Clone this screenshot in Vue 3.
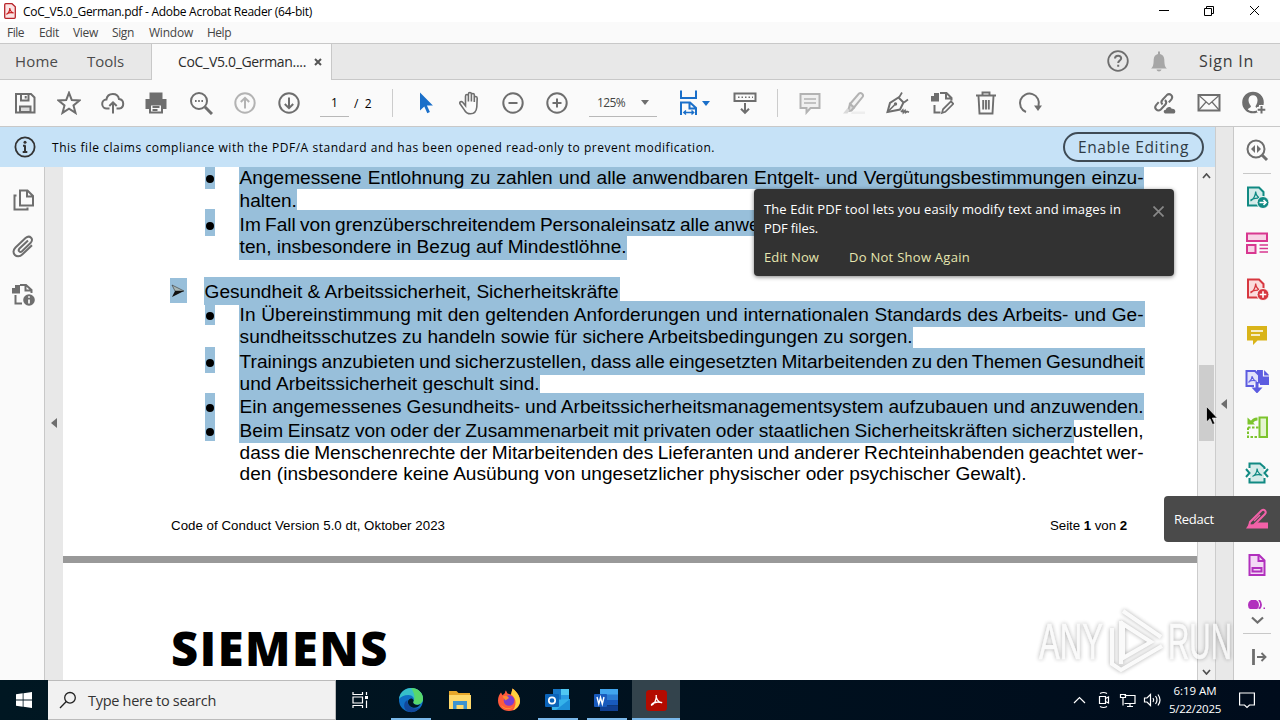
<script setup>
// 让文字占满指定宽度：默认调整字间距，words 修饰符只调整词间距
const vFit = {
	mounted(el, { value, modifiers }) {
		const text = el.textContent.trim()
		const diff = value - el.getBoundingClientRect().width
		if (modifiers.words) {
			el.style.wordSpacing = diff / (text.split(' ').length - 1) + 'px'
		} else {
			el.style.letterSpacing = diff / text.length + 'px'
		}
	}
}

// 菜单
const menus = [
	{ text: 'File', w: 17, gap: 15 },
	{ text: 'Edit', w: 20, gap: 14 },
	{ text: 'View', w: 25, gap: 14 },
	{ text: 'Sign', w: 22, gap: 15 },
	{ text: 'Window', w: 44, gap: 14 },
	{ text: 'Help', w: 24, gap: 0 }
]

// 图标，全部使用 24x24 的画布
const icons = {
	save: '<path d="M3 3h15l3.500 3.500V21.500H3z"/><path d="M8 3v6.500h7.500V3M12.700 5v2.500"/><path d="M7 21v-5.500h10.500V21z" fill="#ddd"/>',
	star: '<path d="M12 1.800l2.800 7.300 7.700.4-6 4.900 2 7.500-6.500-4.200-6.500 4.200 2-7.500-6-4.900 7.700-.4z"/>',
	upload: '<path d="M8.500 17.500H6a4.500 4.500 0 0 1-.6-9C6 5 8.600 3 11.800 3c3.300 0 5.600 2 6.200 5a4.800 4.800 0 0 1 .2 9.500h-2.700M12 22.500V11.500M8.300 15l3.700-3.700 3.700 3.700"/>',
	print: '<path d="M5 2h12v5H5zM.5 8h21v10h-3.500v-3.500H4V18H.5z" fill="#6e6e6e" stroke="none"/><path d="M5.500 2.500h11V8h-11z" fill="#6e6e6e"/><path d="M5 13.500h12v8H5zM7.500 16h7M7.500 19h5" fill="#fafafa"/>',
	find: '<circle cx="10" cy="10" r="8"/><path d="M16 16l7 7" stroke-width="3"/><path d="M6 10h1.600M9.200 10h1.600M12.400 10H14" stroke-width="2"/>',
	up: '<circle cx="12" cy="12" r="9.700"/><path d="M12 17.500V7M7.800 11L12 6.800 16.200 11"/>',
	down: '<circle cx="12" cy="12" r="9.700"/><path d="M12 6.500V17M7.800 13l4.200 4.200 4.200-4.200"/>',
	pointer: '<path d="M7 1.500v18l4.300-4 3 6.700 2.600-1.200-3-6.500h6z" fill="#1a6fc9" stroke="none"/>',
	hand: '<path d="M8.500 13V5.200c0-2.200 2.900-2.200 2.900 0V10.500M11.400 10V3.200c0-2.200 3-2.200 3 0V10.500M14.400 10V4c0-2 2.900-2 2.900 0v7M17.300 11V7c0-2 2.900-1.900 2.900.2L19.800 16c-.4 4.200-2.600 6.800-6.300 6.800-3 0-4.700-1.200-6.200-4L3 12.800c-1-1.900 1.400-3 2.700-1.500l2.800 3.400V11" stroke-width="1.600"/>',
	minus: '<circle cx="12" cy="12" r="9.700"/><path d="M7.500 12h9"/>',
	plus: '<circle cx="12" cy="12" r="9.700"/><path d="M7.500 12h9M12 7.500v9"/>',
	fit: '<path d="M5 -.5v7.500h15v-7.500" stroke-width="2"/><path d="M5 24V11.500h9l6 5.500v7M13.500 12v5.500H20" stroke-width="2"/><path d="M8 21.500h9.500M10 19.500l-2.200 2 2.200 2M15.500 19.500l2.200 2-2.200 2" stroke-width="1.400"/>',
	keyboard: '<path d="M1.500 2.500h21v7.500h-21z"/><path d="M5 6.300h1.500M8.500 6.300H10M12 6.300h1.500M15.500 6.300H17M19 6.300h1" stroke-width="1.600"/><path d="M12 12v9.500M8 17.800l4 4 4-4"/>',
	comment: '<path d="M2.500 3h19v14h-9l-4 4.500V17h-6z" fill="#e8e8e8"/><path d="M6 8h12M6 12h12" stroke-width="1.300"/>',
	marker: '<path d="M8 13l9-10.500c2-1.500 5 1 3.700 3.300L12 16.500z" fill="#eee"/><path d="M8 13l4 3.500-2.500 3L6 20z" fill="#bbb"/><path d="M1 22.500L5.500 17l2 2.500-2 3z" fill="#bbb" stroke="none"/><path d="M10 20.500h13v2.500H9z" fill="#e4e4e4" stroke="none"/>',
	sign: '<path d="M1.500 21L4 12l8.500-5.500 5 5L14 18.500z"/><path d="M1.500 21L8.500 14M13 6.500l3-5M18 11.500l4-3M15 21l1.800-2 .5 2.500 1.700-2 .5 2 1.500-1 2 .8" stroke-width="1.700"/><circle cx="9.500" cy="13" r="1.700" fill="#6e6e6e" stroke="none"/>',
	edit: '<path d="M10 2h6.500l5 5v2.500M16 2v5.500h5M4.500 14v7.500h6" /><path d="M1 5h8v5.500H1zM4 2h5v4H4z" fill="#6e6e6e" stroke="none"/><path d="M12 22l1-3.700 8-8 2.300 2.500-8 8z" stroke-width="1.700"/>',
	trash: '<path d="M2 4.500h20M8.500 4V1.500h7V4M4.500 5l1 17.500h13l1-17.500M9.200 9v9.500M12 9v9.500M14.800 9v9.500" stroke-width="1.900"/>',
	rotate: '<path d="M8 21A9.500 9.500 0 1 1 20.500 15"/><path d="M16 14.500h8l-4 5.500z" fill="#6e6e6e" stroke="none"/>',
	link: '<path d="M10.500 13.500c-1.500-1.600-1.400-3.400 0-4.800l4.300-4.600c3-2.600 7 1 4.600 4.200l-2.600 3M13 9c1.500 1.500 1.600 3.300.2 4.800l-4.400 4.700c-3.200 2.800-7.300-1.200-4.700-4.400l2.600-2.900"/><path d="M13 22.500c-2.300-1.300-1.200-4 .8-3.800 1-3.500 5-3.500 6-.8 3.500-.5 4.700 3.500 2.200 4.600z" fill="#6e6e6e" stroke="none"/>',
	mail: '<path d="M1.500 4h21v15.500h-21z"/><path d="M1.500 4L12 13.500 22.500 4M1.500 19.500L9 11M22.500 19.500L15 11" stroke-width="1.200"/>',
	user: '<circle cx="11" cy="11.500" r="9.800"/><path d="M11 1.500C4 2 .5 8 1.500 13.500c.5 3.500 4 7.500 8 7.800l-4-2.500c.5-1.500 3.500-2 3.500-3.500-4-5-3-11 2-11s6 6 2.500 11c0 1 1 1.500 1.500 1.500l6-4C22 7 17.500 1 11 1.500z" fill="#6e6e6e" stroke="none"/><path d="M19.500 14v9M15 18.500h9" stroke="#fafafa" stroke-width="5"/><path d="M19.500 15v7.500M15.700 18.700h7.600"/>',
	help: '<circle cx="12" cy="12" r="9.800" stroke-width="1.800"/><path d="M9 9.500c0-3.600 6.200-3.600 6.200-.3 0 2.300-3 2.300-3 4.800M12.200 15.800v2"/>',
	bell: '<path d="M4 19.500c2-1.500 2.500-3 2.700-9 .1-3 1.800-5 4.300-5.500V2.500h2V5c2.500.5 4.200 2.500 4.300 5.500.2 6 .7 7.500 2.700 9zM9.500 20.500h5c-.5 2.500-4.500 2.500-5 0z" fill="#a6a6a6" stroke="none"/>',
	info: '<circle cx="12" cy="12" r="9.600" stroke-width="1.800"/><path d="M12 10.500v6.500M9.700 17h4.600M10 10.800h2.500" stroke-width="2"/><circle cx="12" cy="7.200" r="1.500" fill="#333" stroke="none"/>',
	pages: '<path d="M9 2.500h7.500L22 8v9.500H9zM16 2.500V8.500h6"/><path d="M5.500 7.500H3.500v14h13v-2"/>',
	clip: '<path d="M17 5.500l-8.500 8c-2 2.200.5 4.500 2.500 2.700L19.500 8c4-4-.8-8.500-5-4.900L4.500 12.500c-5.500 5.500 1.500 12 7 6.700l9.500-9"/>',
	fileinfo: '<path d="M9 3h6l5.500 5v3M14.500 3v5.500h5.500M4.500 13v8.500h6.500"/><path d="M1 6h8v5.500H1zM4 3h5v4H4z" fill="#6e6e6e" stroke="none"/><circle cx="18" cy="18" r="5.800" fill="#6e6e6e" stroke="none"/><path d="M18 17.500v4M18 14.300v1.500" stroke="#fff" stroke-width="1.700"/>'
}
const leftTools = ['save', 'star', 'upload', 'print', 'find', 'up', 'down']
const zoomTools = ['pointer', 'hand', 'minus', 'plus']
const editTools = ['comment', 'marker', 'sign', 'edit', 'trash', 'rotate']
const shareTools = ['link', 'mail', 'user']
const sideNav = ['pages', 'clip', 'fileinfo']
const disabled = ['up', 'comment', 'marker']

// PDF 小标志
const pdfMark = 'M5.500 16c3-2 5-5.500 5.200-9.500M10.700 7c.3 3 2.800 6 6.300 7M5.500 15c3.500-2 7.500-2.500 11.500-1.200'

// 右侧工具
const panel = [
	{ color: '#118a83', svg: `<path d="M3 2.500h11l4.500 4.500v13.500H3z" fill="#d5ebe9"/><path d="${pdfMark}" stroke-width="1.300"/><circle cx="18" cy="17.500" r="6" fill="#118a83" stroke="#fafafa" stroke-width="1"/><path d="M14.500 17.500h6M18.500 15l2.500 2.500-2.500 2.500" stroke="#fff" stroke-width="1.600"/>` },
	{ color: '#d83790', svg: '<path d="M2 2.500h20v7.500H2z" fill="#f8d3e6"/><path d="M2 14h8.500v8H2z" fill="#f8d3e6"/><path d="M14.500 14H23M14.500 17.500H23M14.500 21H23" stroke-width="1.400"/>' },
	{ color: '#d7373f', svg: `<path d="M3 2.500h11l4.500 4.500v13.500H3z" fill="#fbdcdd"/><path d="${pdfMark}" stroke-width="1.300"/><circle cx="18" cy="17.500" r="6" fill="#d7373f" stroke="#fafafa" stroke-width="1"/><path d="M14.700 17.500h6.600M18 14.200v6.600" stroke="#fff" stroke-width="1.600"/>` },
	{ color: '#d9b419', svg: '<path d="M2 3h20v14.500h-9.500L8 22v-4.500H2z" fill="#d9b419" stroke="none"/><path d="M6 8h12M6 12h9" stroke="#fff" stroke-width="1.600"/>' },
	{ color: '#5c5ce0', svg: '<path d="M12 1h7l5 5v10H12z" fill="#5c5ce0" stroke="none"/><path d="M1.500 2h8.500l4 4v11h-12.500z" fill="#e2e2fa"/><path d="M3.500 13.500c2-1.500 3.500-3.500 3.700-6.500.5 2.500 2 4.500 4.500 5.500M4 12.500c2.500-1 5-1.200 7-.5" stroke-width="1.100"/><path d="M18.500 1v6h5.500" stroke="#fafafa" stroke-width="1.200"/><path d="M12 14.500v5" stroke="#fafafa" stroke-width="6"/><path d="M6.500 18.500h11L12 24.500z" fill="#5c5ce0" stroke="none"/><path d="M12 13v7" stroke-width="3"/>' },
	{ color: '#7cc42d', svg: '<path d="M14.500 2.500h7.500v19.500h-7.500z" fill="#e4f4d0"/><path d="M3 12.500v9.500h10M3 12.500h11" stroke-dasharray="2.500 1.500"/><path d="M12.500 4C9 4 7.500 5.500 6.500 8" stroke-width="3"/><path d="M2.500 2.500v7h7.500z" fill="#7cc42d" stroke="none"/>' },
	{ color: '#118a83', svg: '<path d="M5 3h10l4 4v14H5z" fill="#d5ebe9" stroke="none"/><path d="M4.500 7V2.500h10.500l4.500 4V8M4.500 17v4.500h15V17"/><path d="M1 8l3.500 4L1 16M23 8l-3.500 4 3.500 4"/><path d="M7.500 15.500c3-1.500 4.500-4 4.600-8 .3 3.500 2 5.500 5 7M8 15c3-1.500 6-1.800 9-.8" stroke-width="1.200"/>' },
	{ color: '#e8559f', svg: '' },
	{ color: '#b130bd', svg: '<path d="M4.500 2h9.500l5.500 5.500V22h-15z" fill="#f3d9f5"/><path d="M13.500 2v6h6M7.500 15h9v3.500h-9z"/>' }
]

// 文档正文，w 为选区宽度，tw 为文字宽度
const lines = [
	{ h: 22, pad: 3, w: 905, tw: 904, dot: [0, 22], text: 'Angemessene Entlohnung zu zahlen und alle anwendbaren Entgelt- und Vergütungsbestimmungen einzu-' },
	{ h: 21, pad: 4, w: 58, tw: 57, text: 'halten.' },
	{ h: 26, pad: 7, w: 905, tw: 520, dot: [-1, 27], text: 'Im Fall von grenzüberschreitendem Personaleinsatz alle anwe' },
	{ h: 24, pad: 3, w: 388, tw: 387, text: 'ten, insbesondere in Bezug auf Mindestlöhne.' },
	{ h: 17, empty: true },
	{ h: 24, box: 28, pad: 7, w: 416, tw: 414, head: true, text: 'Gesundheit & Arbeitssicherheit, Sicherheitskräfte' },
	{ h: 26, pad: 6, w: 906, tw: 904, dot: [4, 20], text: 'In Übereinstimmung mit den geltenden Anforderungen und internationalen Standards des Arbeits- und Ge-' },
	{ h: 21, pad: 2, w: 674, tw: 673, text: 'sundheitsschutzes zu handeln sowie für sichere Arbeitsbedingungen zu sorgen.' },
	{ h: 27, pad: 6, w: 906, tw: 904, dot: [-1, 26], text: 'Trainings anzubieten und sicherzustellen, dass alle eingesetzten Mitarbeitenden zu den Themen Gesundheit' },
	{ h: 18, pad: 1, w: 301, tw: 300, text: 'und Arbeitssicherheit geschult sind.' },
	{ h: 27, pad: 6, w: 905, tw: 904, dot: [0, 27], text: 'Ein angemessenes Gesundheits- und Arbeitssicherheitsmanagementsystem aufzubauen und anzuwenden.' },
	{ h: 23, pad: 3, w: 835, tw: 904, dot: [0, 21], text: 'Beim Einsatz von oder der Zusammenarbeit mit privaten oder staatlichen Sicherheitskräften sicherzustellen,' },
	{ h: 21, pad: 2, w: 0, tw: 904, text: 'dass die Menschenrechte der Mitarbeitenden des Lieferanten und anderer Rechteinhabenden geachtet wer-' },
	{ h: 21, pad: 2, w: 0, tw: 787, text: 'den (insbesondere keine Ausübung von ungesetzlicher physischer oder psychischer Gewalt).' }
]
</script>

<template>
	<div class="screen">
		<!-- 标题栏 -->
		<div class="titlebar">
			<svg class="app-icon" width="12" height="16" viewBox="0 0 12 16">
				<path d="M.7 1.700q0-1 1-1h6.300l3.300 3v10.600q0 1-1 1H1.700q-1 0-1-1z" fill="#fbe3e3" stroke="#b8242a" stroke-width="1.300" />
				<path d="M2.500 11.500C4.500 10 6 8 5.800 5M5.800 5.500C6.300 8 7.500 9.500 9.700 10M2.700 11c2-1.500 4.500-1.700 7-1" fill="none" stroke="#c81e1e" stroke-width="1.200" />
			</svg>
			<span v-fit="289" class="title">CoC_V5.0_German.pdf - Adobe Acrobat Reader (64-bit)</span>
			<svg class="win-btns" width="104" height="14" viewBox="0 0 104 14" fill="none" stroke="#000">
				<path d="M0 6.500h10M45.500 4.500h7v7h-7zM47.500 4.500v-2h7v7h-2M91 2l9 9M100 2l-9 9" />
			</svg>
		</div>
		<div class="menubar">
			<span
				v-for="m in menus"
				:key="m.text"
				:style="{ marginRight: m.gap + 'px' }"
				><span v-fit="m.w">{{ m.text }}</span></span
			>
		</div>

		<!-- 标签页 -->
		<div class="tabs">
			<div class="tab home"><span v-fit="43">Home</span></div>
			<div class="tab tools"><span v-fit="37">Tools</span></div>
			<div class="tab active">
				<span v-fit="128">CoC_V5.0_German....</span>
				<svg width="8" height="8" viewBox="0 0 8 8"><path d="M1 1l6 6M7 1L1 7" stroke="#555" stroke-width="2" /></svg>
			</div>
			<div class="account">
				<svg class="icon" viewBox="0 0 24 24" v-html="icons.help"></svg>
				<svg class="icon bell" viewBox="0 0 24 24" v-html="icons.bell"></svg>
				<span v-fit="55">Sign In</span>
			</div>
		</div>

		<!-- 工具栏 -->
		<div class="toolbar">
			<div v-for="t in leftTools" :key="t" class="slot" :class="{ off: disabled.includes(t) }">
				<svg class="icon" viewBox="0 0 24 24" v-html="icons[t]"></svg>
			</div>
			<div class="page-no">1</div>
			<div class="page-all">/&nbsp; 2</div>
			<div class="sep"></div>
			<div v-for="t in zoomTools" :key="t" class="slot">
				<svg class="icon" viewBox="0 0 24 24" v-html="icons[t]"></svg>
			</div>
			<div class="zoom"><span v-fit="28">125%</span><i class="caret"></i></div>
			<div class="fit">
				<svg class="icon blue" viewBox="0 0 24 24" v-html="icons.fit"></svg>
				<i class="caret blue"></i>
			</div>
			<svg class="icon kb" viewBox="0 0 24 24" v-html="icons.keyboard"></svg>
			<div class="sep second"></div>
			<div v-for="t in editTools" :key="t" class="slot" :class="{ off: disabled.includes(t) }">
				<svg class="icon" viewBox="0 0 24 24" v-html="icons[t]"></svg>
			</div>
			<div class="share">
				<div v-for="t in shareTools" :key="t" class="slot">
					<svg class="icon" viewBox="0 0 24 24" v-html="icons[t]"></svg>
				</div>
			</div>
		</div>

		<div class="main">
			<div class="left">
				<!-- 提示条 -->
				<div class="banner">
					<svg class="icon dark" viewBox="0 0 24 24" v-html="icons.info"></svg>
					<span v-fit="663" class="msg">This file claims compliance with the PDF/A standard and has been opened read-only to prevent modification.</span>
					<button class="enable"><span v-fit="111">Enable Editing</span></button>
				</div>
				<div class="work">
					<div class="nav">
						<svg v-for="t in sideNav" :key="t" class="icon" viewBox="0 0 24 24" v-html="icons[t]"></svg>
					</div>
					<div class="gutter"><i class="tri"></i></div>
					<div class="doc">
						<div class="page">
							<div v-for="(l, i) in lines" :key="i" class="line" :class="{ head: l.head }" :style="{ height: l.h + 'px' }">
								<div class="mark">
									<span v-if="l.dot" class="dot" :style="{ marginTop: l.dot[0] + 'px', height: l.dot[1] + 'px', paddingTop: l.pad + 5 - l.dot[0] + 'px' }"><i></i></span>
									<span v-if="l.head" class="arrow">
										<svg width="14" height="14" viewBox="0 0 14 14"><path d="M1 1l12 6H4z" fill="#a9b7b5" stroke="#333" stroke-width=".6" /><path d="M4 7h9L1 13z" fill="#111" /></svg>
									</span>
								</div>
								<div v-if="!l.empty" class="sel" :style="{ width: l.w + 'px', height: (l.box || l.h) + 'px', paddingTop: l.pad + 'px' }">
									<span v-fit.words="l.tw">{{ l.text }}</span>
								</div>
							</div>
							<div class="foot">
								<span v-fit="274">Code of Conduct Version 5.0 dt, Oktober 2023</span>
								<span v-fit="77">Seite <b>1</b> von <b>2</b></span>
							</div>
						</div>
						<div class="page next"><span v-fit="218" class="logo">SIEMENS</span></div>
					</div>
					<div class="scroll">
						<svg width="9" height="6" viewBox="0 0 9 6"><path d="M1 5l3.500-4L8 5" fill="none" stroke="#505050" stroke-width="1.700" /></svg>
						<div class="thumb"></div>
						<svg width="9" height="6" viewBox="0 0 9 6"><path d="M1 1l3.500 4L8 1" fill="none" stroke="#505050" stroke-width="1.700" /></svg>
					</div>
				</div>
			</div>
			<div class="gutter right"><i class="tri"></i></div>
			<div class="panel">
				<svg class="icon search" viewBox="0 0 24 24">
					<circle cx="11" cy="11" r="8.500" /><path d="M17 17l5 5" stroke-width="3" /><path d="M10 7v8l-4-4zM12 7v8l4-4z" fill="#6e6e6e" stroke="none" />
				</svg>
				<hr />
				<svg v-for="(p, i) in panel" :key="i" class="icon tool" viewBox="0 0 24 24" :style="{ stroke: p.color }" v-html="p.svg"></svg>
				<svg class="cut" width="18" height="9" viewBox="0 0 18 9"><path d="M0 5a5.500 5.500 0 0 1 11 0q0 3-2 4H2Q0 8 0 5z" fill="#b130bd" /><path d="M11 0q4 5 0 9M15.500 8.500h1.500" fill="none" stroke="#b130bd" stroke-width="1.800" /></svg>
				<svg class="more" width="13" height="8" viewBox="0 0 13 8"><path d="M1 1.500l5.500 5 5.500-5" fill="none" stroke="#6e6e6e" stroke-width="2.200" /></svg>
				<hr />
				<svg class="collapse" width="16" height="16" viewBox="0 0 16 16" fill="none" stroke="#6e6e6e"><path d="M2.500 0v16" stroke-width="2.800" /><path d="M6 8h8M10.500 4l4 4-4 4" stroke-width="1.900" /></svg>
			</div>
		</div>

		<!-- 任务栏 -->
		<div class="taskbar">
			<div class="start">
				<svg width="16" height="16" viewBox="0 0 16 16" fill="#fff"><path d="M0 2.300l6.700-1v6.300H0zM7.500 1.200L16 0v7.600H7.500zM0 8.400h6.700v6.300L0 13.700zM7.500 8.400H16V16l-8.500-1.200z" /></svg>
			</div>
			<div class="search-box">
				<svg width="18" height="18" viewBox="0 0 18 18" fill="none" stroke="#222" stroke-width="1.300"><circle cx="11" cy="6.800" r="5.300" /><path d="M7.300 10.500L1 17" /></svg>
				<span v-fit="128">Type here to search</span>
			</div>
			<div class="task view">
				<svg width="17" height="16" viewBox="0 0 17 16" fill="none" stroke="#fff" stroke-width="1.200"><path d="M1 0v2.500h9.500V0M1 5h9.500v6H1zM1 16v-2.500h9.500V16M14.500 0v3M14.500 8.500V16" /><path d="M13 4h3v3h-3z" fill="#fff" stroke="none" /></svg>
			</div>
			<div class="task run">
				<svg width="26" height="26" viewBox="0 0 26 26">
					<circle cx="13" cy="13" r="12" fill="#0f6fc5" />
					<path d="M1 12C2 5 7 1 13 1c7 0 12 5 12 10.500 0 4-3 6-6 6-3.500 0-4.500-1.500-3.500-3C17 11 14.500 8 10.500 8 6 8 2.500 10 1 12z" fill="#36bfc9" />
					<path d="M13 1c7 0 12 5 12 10.500 0 4-3 6-6 6-3.500 0-4.500-1.500-3.500-3 2-4 1-8.500-2.500-13.500z" fill="#58d86b" />
					<path d="M9.500 13c-.5 5 3.500 9 9 8.500l3.500-1c-3 4.500-8 5.500-12 4C5 22.500 5 15 9.500 13z" fill="#12489c" />
					<path d="M10 14c1-3 4.500-3.500 5.500-1 .5 1-.5 1.500-.3 2.800.6 2 4.500 3 7.300 1.200-1.500 3-5 4.500-8 3.500-3-1-5-3.500-4.500-6.500z" fill="#001722" />
				</svg>
			</div>
			<div class="task">
				<svg width="22" height="20" viewBox="0 0 22 20"><path d="M0 1h7.500l2 2H21v15H0z" fill="#e8a82a" /><path d="M0 5h22v14H0z" fill="#ffd96b" /><path d="M4 11h14v8h-3.500v-4h-7v4H4z" fill="#3d93cf" /></svg>
			</div>
			<div class="task">
				<svg width="24" height="24" viewBox="0 0 24 24">
					<path d="M12 23C5.500 23 1 18.500 1 12.500 1 9 2.500 6 4 4.500l1.500 2.800L8 5c0-2 1-2.500 1-2.500l1.500 3 3.500 1L15.500.5C20 4 23 8 23 13c0 6-5 10-11 10z" fill="#ff5a3c" />
					<path d="M15.500.5C20 4 23 8 23 13c0 4-3 8-7 9.300C21 15 18 9 14 6.500z" fill="#ffd23e" />
					<path d="M3 15c2 5 9 7 13.500 3.500C14 22 6 23 3 15z" fill="#ffa02f" />
					<circle cx="12" cy="12.500" r="5.300" fill="#7b3fd0" />
					<path d="M5.500 8.500c3-1.500 5-.5 6.500 1.500l-3.500 2.500z" fill="#ff8b30" />
				</svg>
			</div>
			<div class="task run">
				<svg width="26" height="24" viewBox="0 0 26 24"><path d="M8 1h16v12H8z" fill="#1677c7" /><path d="M16 1h8v6h-8z" fill="#50c8f2" /><path d="M16 7h8v6h-8z" fill="#2a9ce3" /><path d="M6 12l19-1v11H7z" fill="#35b2ea" /><path d="M25 11v11H11z" fill="#1e90d8" /><rect y="6" width="14" height="13" rx="1" fill="#0a63b8" /><circle cx="7" cy="12.500" r="3.200" fill="none" stroke="#fff" stroke-width="1.700" /></svg>
			</div>
			<div class="task run">
				<svg width="25" height="22" viewBox="0 0 25 22"><path d="M6 0h18v6H6z" fill="#41a5ee" /><path d="M6 5.500h18V11H6z" fill="#2b7cd3" /><path d="M6 11h18v5.500H6z" fill="#185abd" /><path d="M6 16.500h18V22H6z" fill="#103f91" /><rect y="5" width="13" height="13" rx="1" fill="#185abd" /><path d="M3 8l1.800 7L6.500 8.500 8.300 15 10 8" fill="none" stroke="#fff" stroke-width="1.400" /></svg>
			</div>
			<div class="task run current">
				<svg width="21" height="21" viewBox="0 0 21 21"><rect width="21" height="21" rx="3.500" fill="#b30b00" /><path d="M5 15.500c3-1 5.800-5.500 5.300-10.500M10 5.500c.3 3.500 2.500 6.500 6 7.500M5.200 15c2.500-3 7-3.500 11-2.300" fill="none" stroke="#fff" stroke-width="1.300" /></svg>
			</div>
			<div class="tray">
				<svg width="90" height="18" viewBox="0 0 90 18" fill="none" stroke="#fff" stroke-width="1.200">
					<path d="M1 12l5.500-5.500L12 12" />
					<path d="M26.500 5.500h6v7h-6zM32.500 7.500l3-1.500v6l-3-1.500M27 2.500q3.500-2 7 0M27 15.500q3.500 2 7 0" />
					<path d="M51.500 4.500H62v8H51.500M47.500 3.500h5v3h-5zM50 6.500v8M54 15.500h6M57 12.500v3" />
					<path d="M71.500 7h2.500l3.500-3.500v11L74 11h-2.500zM80 7q1.500 2 0 4M82.500 5q3 4 0 8M85 3.500q4 5.500 0 11" />
				</svg>
				<div class="clock"><span v-fit="43">6:19 AM</span><span v-fit="52">5/22/2025</span></div>
				<svg width="16" height="17" viewBox="0 0 16 17" fill="none" stroke="#fff" stroke-width="1.200"><path d="M.6 1h14.800v12H10.500L8 15.500 5.500 13H.6z" /></svg>
			</div>
		</div>

		<!-- 浮层 -->
		<div class="tip">
			<div class="tip-text"><span v-fit="357">The Edit PDF tool lets you easily modify text and images in</span><span v-fit="54">PDF files.</span></div>
			<div class="tip-links"><span v-fit="55">Edit Now</span><span v-fit="121">Do Not Show Again</span></div>
			<svg class="tip-close" width="11" height="11" viewBox="0 0 11 11"><path d="M.5.5l10 10M10.500.5l-10 10" stroke="#888" stroke-width="1.700" /></svg>
		</div>
		<div class="redact">
			<span v-fit="40">Redact</span>
			<svg width="24" height="24" viewBox="0 0 24 24" fill="none" stroke="#f261a8" stroke-width="2"><path d="M5 15L16.500 3.500c2.500-2 5.500 1 3.500 3.500L9 18l-5 1.500z" /><path d="M9 14l6-6" stroke-width="1.500" /><path d="M1 21.500L4 17l5 1 4-2.500h10v6z" fill="#f261a8" stroke="none" /></svg>
		</div>
		<svg class="watermark" width="210" height="74" viewBox="0 0 210 74">
			<g class="wm">
				<text x="4" y="53" textLength="64" lengthAdjust="spacingAndGlyphs">ANY</text>
				<text x="133" y="53" textLength="64" lengthAdjust="spacingAndGlyphs">RUN</text>
				<path d="M86 15v43M77 22v36l9 6 41-24M88 5l38 26M88 18l28 18-28 16z" />
			</g>
		</svg>
		<svg class="cursor" width="12" height="19" viewBox="0 0 12 19"><path d="M.5.500v15.500l3.500-3.300 2.500 5.800 2.300-1-2.500-5.500h5z" fill="#000" stroke="#fff" stroke-width=".6" /></svg>
	</div>
</template>

<style>
	body {
		overflow: hidden;
	}
	/* v-html 里的图形沿用外层 svg 的描边 */
	svg.icon {
		fill: none;
		stroke: #6e6e6e;
		stroke-width: 2;
	}
</style>

<style scoped>
	.screen {
		position: relative;
		width: 1280px;
		height: 720px;
		overflow: hidden;
		display: flex;
		flex-direction: column;
		background: #fff;
		font-family: 'Open Sans', 'Noto Sans', sans-serif;
		font-size: 12px;
		color: #000;
	}
	.screen * {
		box-sizing: border-box;
	}
	.screen span {
		display: inline-block;
		white-space: nowrap;
	}
	.icon {
		flex: none;
		width: 24px;
		height: 24px;
	}
	.titlebar {
		height: 22px;
		display: flex;
		align-items: center;
		padding-left: 4px;
	}
	.title {
		margin-left: 7px;
		padding-top: 1px;
	}
	.win-btns {
		margin-left: auto;
		margin-right: 17px;
	}
	.menubar {
		height: 21px;
		padding: 0 0 1px 7px;
		display: flex;
		align-items: center;
		background: #fafafa;
		color: #444;
	}
	.tabs {
		height: 37px;
		display: flex;
		background: #e8e8e8;
		border-top: 1px solid #c8c8c8;
		border-bottom: 1px solid #c8c8c8;
		font-size: 15px;
		color: #4b4b4b;
	}
	.tab {
		display: flex;
		align-items: center;
		padding-bottom: 1px;
	}
	.tab.home {
		width: 87px;
		padding-left: 15px;
	}
	.tab.tools {
		width: 64px;
	}
	.tab.active {
		width: 181px;
		height: 36px;
		padding-left: 26px;
		background: #fafafa;
		border-left: 1px solid #c8c8c8;
		border-right: 1px solid #c8c8c8;
		font-size: 14px;
		color: #2c2c2c;
	}
	.tab.active svg {
		margin-left: 8px;
	}
	.account {
		margin-left: auto;
		display: flex;
		align-items: center;
		padding: 0 26px 2px 0;
		font-size: 16px;
		color: #3c3c3c;
	}
	.account .bell {
		margin: 0 28px 0 17px;
	}
	.toolbar {
		height: 47px;
		display: flex;
		align-items: center;
		padding-left: 3px;
		background: #fafafa;
		border-bottom: 1px solid #c8c8c8;
	}
	.slot {
		width: 44px;
		display: flex;
		justify-content: center;
	}
	.slot.off {
		opacity: 0.5;
	}
	.page-no {
		width: 29px;
		height: 27px;
		margin-left: 9px;
		line-height: 26px;
		text-align: center;
		border-bottom: 1px solid #b8b8b8;
	}
	.page-all {
		width: 18px;
		margin-left: 5px;
		white-space: nowrap;
	}
	.sep {
		width: 1px;
		height: 28px;
		margin: 0 10px 0 20px;
		background: #ccc;
	}
	.zoom {
		width: 68px;
		height: 27px;
		margin-left: 10px;
		padding: 0 8px;
		display: flex;
		align-items: center;
		justify-content: space-between;
		border-bottom: 1px solid #b8b8b8;
		color: #444;
	}
	.caret {
		border: 4px solid transparent;
		border-top: 5px solid #6e6e6e;
		border-bottom: 0;
	}
	.caret.blue {
		border-top-color: #1a6fc9;
	}
	.icon.blue {
		stroke: #1a6fc9;
		overflow: visible;
	}
	.icon.dark {
		stroke: #333;
	}
	.fit {
		margin-left: 19px;
		display: flex;
		align-items: center;
		gap: 2px;
	}
	.kb {
		margin-left: 23px;
	}
	.share {
		margin-left: auto;
		display: flex;
		padding-right: 4px;
	}
	.share .slot {
		width: 45px;
	}
	.main {
		height: 553px;
		display: flex;
	}
	.left {
		width: 1216px;
		display: flex;
		flex-direction: column;
		border-right: 1px solid #ccc;
	}
	.banner {
		height: 40px;
		padding: 0 11px 0 13px;
		display: flex;
		align-items: center;
		background: #c6e2f7;
	}
	.msg {
		margin-left: 15px;
	}
	.enable {
		width: 141px;
		height: 30px;
		margin-left: auto;
		padding: 0 0 1px;
		border: 2px solid #3f4b55;
		border-radius: 15px;
		background: none;
		font-family: inherit;
		font-size: 15.500px;
		color: #2f3b45;
	}
	.work {
		height: 513px;
		display: flex;
	}
	.nav {
		width: 45px;
		padding: 21px 0 0 11px;
		display: flex;
		flex-direction: column;
		gap: 23px;
		background: #fafafa;
		border-right: 1px solid #c8c8c8;
	}
	.gutter {
		width: 18px;
		background: #e8e8e8;
		padding: 251px 0 0 6px;
	}
	.tri {
		display: block;
		width: 0;
		border: 5px solid transparent;
		border-right: 6px solid #6e6e6e;
		border-left: 0;
	}
	.gutter.right {
		width: 17px;
		padding: 272px 0 0 5px;
	}
	.doc {
		width: 1134px;
		font-family: 'Liberation Sans', Arial, sans-serif;
	}
	.page {
		height: 396px;
		border-bottom: 7px solid #999;
	}
	.line {
		display: flex;
		font-size: 19.100px;
		line-height: 16px;
	}
	.mark {
		width: 176px;
		padding-left: 142px;
	}
	.head .mark {
		width: 141px;
		padding-left: 107px;
	}
	.dot {
		width: 10px;
		background: #98bfda;
	}
	.dot i {
		display: block;
		width: 8px;
		height: 8px;
		margin-left: 1px;
		border-radius: 50%;
		background: #000;
	}
	.screen .arrow {
		display: block;
		width: 17px;
		height: 25px;
		margin-top: 1px;
		padding: 6px 0 0 1px;
		background: #98bfda;
	}
	.arrow svg {
		display: block;
	}
	.sel {
		background: #98bfda;
	}
	.sel span {
		margin-left: 0.600px;
	}
	.foot {
		display: flex;
		justify-content: space-between;
		padding: 33px 70px 0 108px;
		font-size: 13.300px;
		line-height: 16px;
	}
	.foot span {
		white-space: pre;
	}
	.page.next {
		height: 117px;
		border: 0;
		padding: 65px 0 0 108px;
	}
	.logo {
		font-family: 'Open Sans', 'Noto Sans', sans-serif;
		font-weight: 800;
		font-size: 47px;
		line-height: 40px;
	}
	.scroll {
		width: 18px;
		padding: 6px 0 5px;
		display: flex;
		flex-direction: column;
		align-items: center;
		background: #f0f0f0;
		border-left: 1px solid #ccc;
	}
	.thumb {
		width: 15px;
		height: 76px;
		margin: 186px 0 auto;
		background: #cdcdcd;
	}
	.panel {
		width: 47px;
		display: flex;
		flex-direction: column;
		align-items: center;
		background: #fafafa;
		border-left: 1px solid #c8c8c8;
	}
	.panel hr {
		width: 28px;
		flex: none;
		margin: 0;
		border: 0;
		border-top: 1px solid #c8c8c8;
	}
	.panel .search {
		margin: 11px 0 11px;
	}
	.panel .tool {
		margin: 11px 0;
	}
	.cut {
		flex: none;
		margin-top: 12px;
	}
	.more {
		flex: none;
		margin: 7px 0 9px;
	}
	.collapse {
		flex: none;
		margin: 15px 0 0 4px;
	}
	.taskbar {
		height: 40px;
		display: flex;
		background: linear-gradient(90deg, #001722, #000c1c);
	}
	.start,
	.task {
		width: 49px;
		display: flex;
		align-items: center;
		justify-content: center;
	}
	.start {
		width: 48px;
	}
	.search-box {
		width: 288px;
		padding-left: 11px;
		display: flex;
		align-items: center;
		gap: 11px;
		background: #f1f1f1;
		border: 1px solid #bbb;
		border-left: 0;
		font-size: 14.500px;
		color: #333;
	}
	.task.view {
		width: 50px;
		padding-right: 2px;
	}
	.task.run {
		background: linear-gradient(#7ab8ea, #7ab8ea) 50% 100% / 40px 2px no-repeat;
	}
	.task.run.current {
		width: 48px;
		margin-left: 1px;
		background-color: #33434c;
		background-size: 48px 2px;
	}
	.tray {
		margin-left: auto;
		padding-right: 25px;
		display: flex;
		align-items: center;
		color: #fff;
	}
	.clock {
		width: 52px;
		margin: 0 18px 0 6px;
		display: flex;
		flex-direction: column;
		align-items: center;
		line-height: 18px;
		font-size: 11.500px;
	}
	.tip {
		position: absolute;
		left: 754px;
		top: 189px;
		width: 420px;
		height: 87px;
		padding: 11px 10px;
		border-radius: 4px;
		background: #323232;
		box-shadow: 0 1px 4px rgba(0, 0, 0, 0.5);
		color: #fff;
		font-size: 13px;
		line-height: 19px;
	}
	.tip-text {
		display: flex;
		flex-direction: column;
		align-items: flex-start;
	}
	.tip-links {
		margin-top: 10px;
		display: flex;
		gap: 30px;
		color: #e6e6b0;
	}
	.tip-close {
		position: absolute;
		right: 10px;
		top: 17px;
	}
	.redact {
		position: absolute;
		left: 1164px;
		top: 496px;
		width: 116px;
		height: 46px;
		padding: 0 11px 0 10px;
		display: flex;
		align-items: center;
		justify-content: space-between;
		border-radius: 4px 0 0 4px;
		background: #4a4a4a;
		color: #fff;
		font-size: 13px;
	}
	.watermark {
		position: absolute;
		left: 1035px;
		top: 606px;
		overflow: visible;
		opacity: 0.8;
		filter: drop-shadow(0 0 2px rgba(0, 0, 0, 0.4));
	}
	.wm {
		fill: none;
		stroke: #fafafa;
		stroke-width: 4;
	}
	.wm text {
		font-family: 'Liberation Sans', sans-serif;
		font-size: 50px;
		fill: #fafafa;
		stroke: #fafafa;
		stroke-width: 0.600;
	}
	.cursor {
		position: absolute;
		left: 1206px;
		top: 406px;
	}
</style>
